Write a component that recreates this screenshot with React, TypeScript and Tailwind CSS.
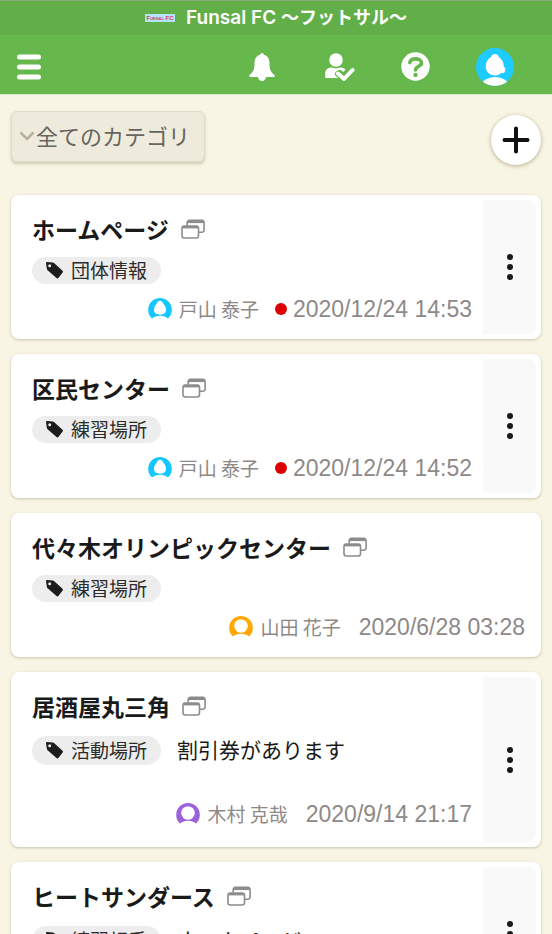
import React from 'react';
import { clsx } from 'clsx';

type Link = {
  title: string;
  tag: string;
  note?: string;
  author?: string;
  avatar?: 'cyan' | 'orange' | 'purple';
  date?: string;
  unread?: boolean;
  editable?: boolean;
};

const links: Link[] = [
  { title: 'ホームページ', tag: '団体情報', author: '戸山 泰子', avatar: 'cyan', date: '2020/12/24 14:53', unread: true, editable: true },
  { title: '区民センター', tag: '練習場所', author: '戸山 泰子', avatar: 'cyan', date: '2020/12/24 14:52', unread: true, editable: true },
  { title: '代々木オリンピックセンター', tag: '練習場所', author: '山田 花子', avatar: 'orange', date: '2020/6/28 03:28' },
  { title: '居酒屋丸三角', tag: '活動場所', note: '割引券があります', author: '木村 克哉', avatar: 'purple', date: '2020/9/14 21:17', editable: true },
  { title: 'ヒートサンダース', tag: '練習相手', note: 'ホームページ', editable: true },
];

const avatarColors = { cyan: '#14c8ff', orange: '#ffa800', purple: '#9b62dc' };

const MenuIcon = () => (
  <svg width="26" height="28" viewBox="0 0 26 28" stroke="#fff" strokeWidth="5" strokeLinecap="round">
    <path d="M3.500 4h19M3.500 14h19M3.500 24h19" />
  </svg>
);

const BellIcon = () => (
  <svg width="30" height="30" viewBox="0 0 30 30" fill="#fff">
    <path d="M14 1c1 0 1.700.7 1.800 1.800C19.700 3.600 21.500 7 21.500 11c0 6.500 1.200 9 4.800 11.700 1 .8.600 2.300-.8 2.300H18c-.3 2.400-1.800 4-4 4s-3.700-1.600-4-4H2.500c-1.400 0-1.800-1.500-.8-2.300C5.300 20 6.500 17.500 6.500 11c0-4 1.800-7.400 5.700-8.200C12.300 1.700 13 1 14 1z" />
  </svg>
);

const UserCheckIcon = () => (
  <svg width="31" height="30" viewBox="0 0 31 30" fill="#fff">
    <circle cx="12" cy="8" r="6.800" />
    <path d="M2.500 26c-.8 0-1.300-.5-1.300-1.300v-2.700c0-4 2.300-6.500 6.300-6.500 1.500 0 3 .9 4.500.9s3-.9 4.500-.9c2 0 3.800.8 5 2.300l-2.200 2.200-1.500-1.300c-1.300-1.200-3-1.200-4.200 0s-1.200 2.900 0 4.100L17 26z" />
    <path d="M14 22l6 5 8.500-8.500" fill="none" stroke="#66b84c" strokeWidth="6" strokeLinecap="round" strokeLinejoin="round" />
    <path d="M14 21.500l6 5.500 8.500-9" fill="none" stroke="#fff" strokeWidth="4" strokeLinecap="round" strokeLinejoin="round" />
  </svg>
);

const HelpIcon = () => (
  <svg width="29" height="29" viewBox="0 0 29 29" fill="none">
    <circle cx="14.500" cy="14.500" r="14.200" fill="#fff" />
    <path d="M8.800 10.500c.6-2.300 2.700-3.600 5.700-3.600 3.300 0 6 1.500 6 4 0 3.600-5.700 3-6 7" stroke="#66b84c" strokeWidth="3.600" strokeLinecap="round" />
    <circle cx="14.500" cy="22.900" r="2.200" fill="#66b84c" />
  </svg>
);

const AccountIcon = () => (
  <svg width="38" height="38" viewBox="0 0 38 38">
    <clipPath id="account">
      <circle cx="19" cy="19" r="19" />
    </clipPath>
    <g clipPath="url(#account)" fill="#fff">
      <rect width="38" height="38" fill="#1ecbff" />
      <path d="M19 6c1.900 0 3.200 1.200 4.200 3.200 2.700 2 4.600 5 4.600 9.300l2 2.500-1.200.8.8 1.200-1.500 2-3.500.3C22.800 27.200 21 27.500 19 27.500c-5 0-9.300-3.500-9.300-9 0-4.300 2.200-7.500 5.100-9.300C15.800 7.200 17.100 6 19 6z" />
      <ellipse cx="19" cy="38" rx="14" ry="9" />
    </g>
  </svg>
);

const AuthorIcon = ({ color }: { color: 'cyan' | 'orange' | 'purple' }) => (
  <svg width="24" height="24" viewBox="0 0 24 24">
    <path d="M4 21.500A11.800 11.800 0 1 1 20 21.500C18 19.500 15 18.700 12 18.700S6 19.500 4 21.500z" fill={avatarColors[color]} />
    {color === 'cyan' ? (
      <path d="M12 3.800c1.700 0 2.800 1.500 3.500 3.300 1.700 1.700 2.500 3.700 2.500 5.900 0 3-2.600 4.700-6 4.700S6 16 6 13c0-2.200.8-4.200 2.500-5.900C9.200 5.300 10.300 3.800 12 3.800z" fill="#fff" />
    ) : (
      <path d="M12 4.500c4 0 6.800 2.700 6.800 6.500 0 1.500-.6 2.700-1.300 3.600-.7 2-2.600 3.200-5.500 3.200s-4.800-1.200-5.500-3.200c-.7-.9-1.300-2.100-1.300-3.600 0-3.800 2.800-6.500 6.800-6.500z" fill="#fff" />
    )}
    <path d="M5 21.500c2-1.600 4.500-2.200 7-2.200s5 .6 7 2.200c-2 1.500-4.500 2.300-7 2.300s-5-.8-7-2.300z" fill="#fff" />
  </svg>
);

const WindowsIcon = () => (
  <svg width="24" height="20" viewBox="0 0 24 20" fill="none" stroke="#8c8c8c" strokeWidth="1.600">
    <path d="M6.200 6.500V3.500a2.200 2.200 0 0 1 2.200-2.200h12.500a2.200 2.200 0 0 1 2.200 2.200v7.500a2.200 2.200 0 0 1-2.200 2.200H18" />
    <path d="M6.800 2.700h15.800" strokeWidth="2.800" />
    <rect x="1" y="7" width="16.500" height="12" rx="2.200" fill="#fff" />
    <path d="M1.500 8.200h15.500" strokeWidth="2.400" />
  </svg>
);

const TagIcon = () => (
  <svg width="17" height="17" viewBox="0 0 17 17" fill="#1c1c1c">
    <path fillRule="evenodd" d="M0 1.200C0 .5.500 0 1.200 0l5.500.5c.5 0 .9.200 1.300.5l8.500 7.800c.6.500.6 1.200.1 1.800l-4.200 5.300c-.5.600-1.300.7-1.900.1L1.600 8.200C1.200 7.800 1 7.400.9 6.900zM3.700 2.300a1.500 1.500 0 1 0 0 3 1.500 1.500 0 0 0 0-3z" />
  </svg>
);

const Header: React.FC = () => (
  <header className="border-b border-[#d3e9c8] bg-[#66b84c] text-white">
    <div className="flex h-[35px] items-center justify-center gap-[11px] border-t border-[#8fae80] bg-[#62ae49]">
      <span className="flex h-2 w-[30px] items-center justify-center overflow-hidden bg-[#b4e4f8] font-['Liberation_Sans',sans-serif] text-[6px] leading-none font-bold whitespace-nowrap text-[#dc3c58] [font-variant:small-caps]">
        Funsal FC
      </span>
      <h1 className="font-['Inter','Noto_Sans_CJK_JP',sans-serif] text-[19px] leading-6 font-semibold">
        Funsal FC <span className="text-[18px]">〜フットサル〜</span>
      </h1>
    </div>
    <nav className="flex h-[59px] items-center justify-between pt-1 pr-[38px] pl-4">
      <button aria-label="メニュー">
        <MenuIcon />
      </button>
      <div className="flex items-center gap-[46px]">
        <button aria-label="お知らせ">
          <BellIcon />
        </button>
        <button aria-label="出欠">
          <UserCheckIcon />
        </button>
        <button aria-label="ヘルプ">
          <HelpIcon />
        </button>
        <button aria-label="アカウント">
          <AccountIcon />
        </button>
      </div>
    </nav>
  </header>
);

const LinkCard: React.FC<{ link: Link }> = ({ link }) => (
  <article className="flex min-h-36 rounded-lg bg-white shadow-[0_1px_3px_rgba(90,80,30,0.3)]">
    <div className={clsx('min-w-0 flex-1 pt-4 pl-[21px]', link.note ? 'pb-[19px]' : 'pb-4', link.editable ? 'pr-[11px]' : 'pr-4')}>
      <a href="#" className="flex items-center gap-3 text-[23px] leading-9 font-bold text-[#1a1a1a]">
        {link.title}
        <WindowsIcon />
      </a>
      <div className={clsx('mt-[9px] flex items-center gap-4', link.note ? 'h-[34px]' : 'h-7')}>
        <span
          className={clsx(
            'flex items-center gap-2 rounded-full bg-[#ededed] px-[14px] text-[19px] text-[#2b2b2b]',
            link.note ? 'h-[29px]' : 'h-[27px]',
          )}
        >
          <TagIcon />
          {link.tag}
        </span>
        {link.note && <span className="text-[21px] text-[#1a1a1a]">{link.note}</span>}
      </div>
      {link.author && link.avatar && (
        <div className={clsx('flex h-7 items-center justify-end text-[#8e8987]', link.note ? 'mt-[33px]' : 'mt-[11px]')}>
          <AuthorIcon color={link.avatar} />
          <span className="ml-[7px] text-[19px]">{link.author}</span>
          {link.unread && <span className="ml-4 size-3 rounded-full bg-[#dc0000]" />}
          <time className={clsx("font-['Liberation_Sans',sans-serif] text-[23px]", link.unread ? 'ml-[6px]' : 'ml-[18px]')}>{link.date}</time>
        </div>
      )}
    </div>
    {link.editable && (
      <button aria-label="操作" className="my-[5px] mr-[5px] flex w-[53px] flex-col items-center justify-center gap-1 rounded-r-lg bg-[#f9f9f9]">
        <span className="size-[6px] rounded-full bg-[#1a1a1a]" />
        <span className="size-[6px] rounded-full bg-[#1a1a1a]" />
        <span className="size-[6px] rounded-full bg-[#1a1a1a]" />
      </button>
    )}
  </article>
);

const App: React.FC = () => {
  return (
    <div className="min-h-screen bg-[#f9f5e4] font-['Noto_Sans_CJK_JP',sans-serif]">
      <Header />
      <main className="px-[11px] pt-4 pb-4">
        <div className="flex items-start justify-between">
          <div className="relative">
            <svg className="pointer-events-none absolute top-5 left-2" width="16" height="12" viewBox="0 0 16 12" fill="none" stroke="#b5b19e" strokeWidth="2.500">
              <path d="M1.500 1.500L8 8l6.500-6.500" />
            </svg>
            <select
              aria-label="カテゴリ"
              className="h-[51px] w-[194px] appearance-none rounded-md border border-[#dfdcca] bg-[#eeebdd] pb-[2px] pl-6 text-[22px] text-[#66655f] shadow-[0_2px_3px_rgba(90,80,30,0.25)]"
            >
              <option>全てのカテゴリ</option>
            </select>
          </div>
          <button aria-label="追加" className="mt-1 flex size-[50px] items-center justify-center rounded-full bg-white shadow-[0_1px_4px_rgba(90,80,30,0.45)]">
            <svg width="28" height="28" viewBox="0 0 28 28" stroke="#111" strokeWidth="4" strokeLinecap="round">
              <path d="M14 2.500v23M2.500 14h23" />
            </svg>
          </button>
        </div>
        <div className="mt-[30px] flex flex-col gap-[15px]">
          {links.map((link) => (
            <LinkCard key={link.title} link={link} />
          ))}
        </div>
      </main>
    </div>
  );
};

export default App;
